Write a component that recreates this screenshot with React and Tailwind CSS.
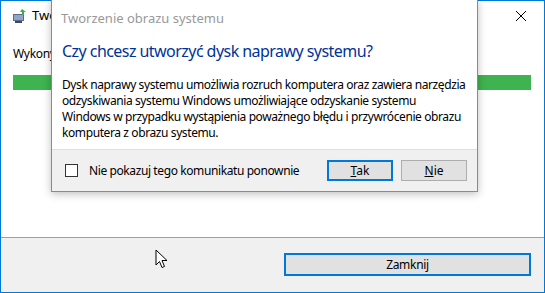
import React from "react";

const font = { fontFamily: '"Noto Sans", "Open Sans", sans-serif' };

function AppIcon() {
  return (
    <svg width="16" height="16" viewBox="0 0 16 16">
      <rect x="1" y="6" width="11" height="7" fill="#5a6b8c" />
      <rect x="2" y="7" width="9" height="5" fill="#8fa6c9" />
      <rect x="3" y="13" width="7" height="2" fill="#3d4a63" />
      <path d="M10 1 L14 4 L12 4 L12 7 L10 7 L10 4 L8 4 Z" fill="#3bae49" />
    </svg>
  );
}

function Cursor() {
  return (
    <svg width="14" height="20" viewBox="0 0 14 20" className="absolute left-[155px] top-[249px]">
      <path
        d="M1 1 L1 16 L4.5 12.5 L7 18.5 L9.5 17.5 L7 11.5 L12 11.5 Z"
        fill="#fff"
        stroke="#000"
        strokeWidth="1"
        strokeLinejoin="miter"
      />
    </svg>
  );
}

export default function App() {
  return (
    <div className="relative w-[545px] h-[293px] overflow-hidden bg-white" style={font}>
      {/* window behind */}
      <div className="flex flex-col w-full h-full border border-[#0078d7]">
        <div className="flex items-center h-[30px] pl-[11px] bg-white">
          <AppIcon />
          <span className="ml-[4px] text-[13px] text-black whitespace-nowrap">Tworzenie obrazu systemu</span>
          <div className="ml-auto flex items-center">
            <div className="w-[10px] h-[10px] border border-[#555] mr-[36px]" />
            <svg width="46" height="30" viewBox="0 0 46 30">
              <path d="M18 10 L28 20 M28 10 L18 20" stroke="#000" strokeWidth="1" />
            </svg>
          </div>
        </div>
        <div className="flex-1 flex flex-col px-[12px] pt-[14px] bg-white">
          <span className="text-[12px] tracking-[-0.3px] text-black whitespace-nowrap">Wykonywanie kopii zapasowej...</span>
          <div className="mt-[12px] h-[15px] w-[518px] bg-[#3fb34f]" />
        </div>
        <div className="h-[55px] border-t border-[#a0a0a0] bg-[#f0f0f0] flex items-start justify-end pt-[15px] pr-[13px]">
          <button className="w-[247px] h-[23px] border-2 border-[#0078d7] bg-[#e1e1e1] text-[12px] tracking-[-0.3px] text-black leading-none">
            Zamknij
          </button>
        </div>
      </div>

      {/* dialog */}
      <div className="absolute left-[51px] top-[-1px] w-[427px] h-[193px] flex flex-col border border-[#8a8a8a] bg-white shadow-[0_2px_8px_rgba(0,0,0,0.25)]">
        <div className="h-[30px] pl-[9px] pt-[5px]">
          <span className="text-[13px] leading-[18px] text-[#999999] whitespace-nowrap">Tworzenie obrazu systemu</span>
        </div>
        <div className="flex-1 px-[10px] pt-[10px] whitespace-nowrap">
          <h1 className="text-[16px] leading-[22px] tracking-[-0.55px] text-[#003399]">Czy chcesz utworzyć dysk naprawy systemu?</h1>
          <p className="mt-[15px] text-[12px] leading-[16px] tracking-[-0.4px] text-black">
            Dysk naprawy systemu umożliwia rozruch komputera oraz zawiera narzędzia
            <br />
            odzyskiwania systemu Windows umożliwiające odzyskanie systemu
            <br />
            Windows w przypadku wystąpienia poważnego błędu i przywrócenie obrazu
            <br />
            komputera z obrazu systemu.
          </p>
        </div>
        <div className="h-[42px] border-t border-[#dfdfdf] bg-[#f0f0f0] flex items-center pl-[13px] pr-[10px]">
          <div className="w-[13px] h-[13px] border border-[#333] bg-white" />
          <span className="ml-[11px] text-[12px] tracking-[-0.4px] text-black whitespace-nowrap">Nie pokazuj tego komunikatu ponownie</span>
          <div className="ml-auto flex gap-[8px]">
            <button className="w-[66px] h-[21px] border-2 border-[#0078d7] bg-[#e1e1e1] text-[12px] text-black leading-none">
              <span className="underline">T</span>ak
            </button>
            <button className="w-[66px] h-[21px] border border-[#adadad] bg-[#e1e1e1] text-[12px] text-black leading-none">
              <span className="underline">N</span>ie
            </button>
          </div>
        </div>
      </div>

      <Cursor />
    </div>
  );
}
